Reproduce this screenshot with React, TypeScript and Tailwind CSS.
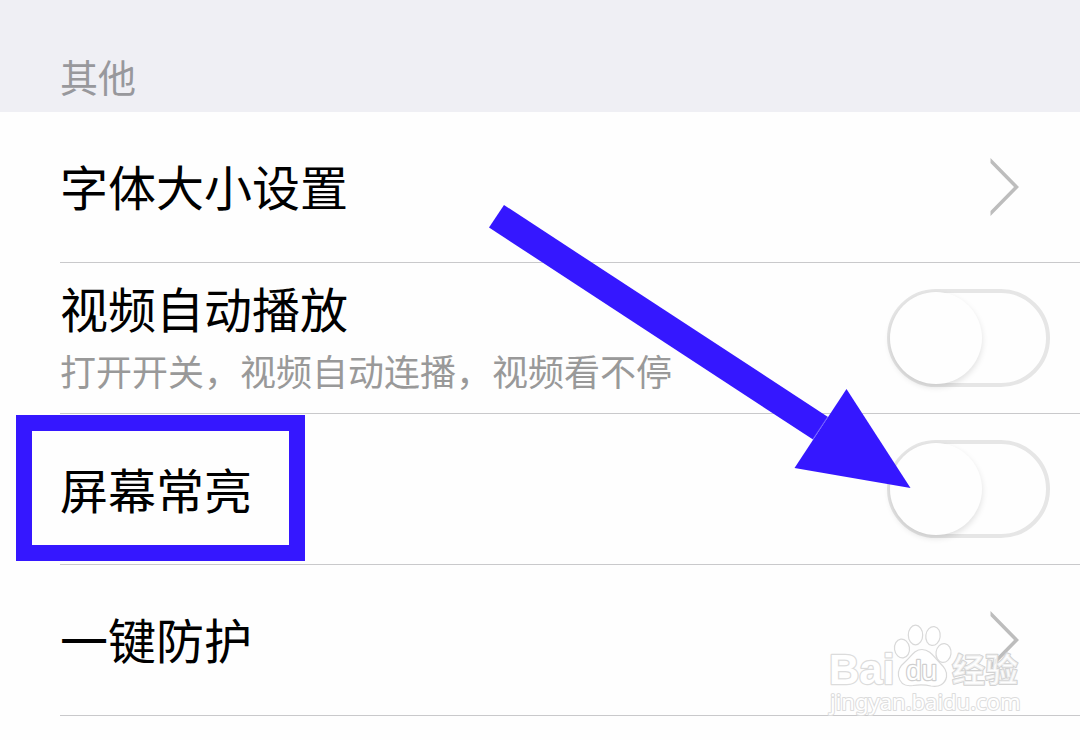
import { useState } from "react";

const titleClass = "text-[48px] leading-[64px] text-black";

function Chevron() {
  return (
    <svg className="mr-[60px] h-[60px] w-8 shrink-0" viewBox="0 0 32 60" fill="none" aria-hidden="true">
      <path d="M2.500 1V6L26 30 2.500 54V59L31 30Z" fill="#bdbdbd" />
    </svg>
  );
}

function LinkRow({ title }: { title: string }) {
  return (
    <li className="ml-[60px] border-b border-[#c9c9cb]">
      <button type="button" className="flex h-[150px] w-full items-center justify-between text-left">
        <span className={`pb-1 ${titleClass}`}>{title}</span>
        <Chevron />
      </button>
    </li>
  );
}

function SwitchRow({ id, title, note, marked }: { id: string; title: string; note?: string; marked?: boolean }) {
  const [on, setOn] = useState(false);
  return (
    <li className="relative ml-[60px] flex h-[151px] items-center justify-between border-b border-[#c9c9cb]">
      {marked && (
        <span className="pointer-events-none absolute -left-11 top-px h-[146px] w-[289px] border-[16px] border-[#3517ff]" />
      )}
      <div className={note ? "pb-0" : "pb-0.5"}>
        <label htmlFor={id} className={`block ${titleClass}`}>
          {title}
        </label>
        {note && <p className="text-[36px] leading-[62px] text-[#999999]">{note}</p>}
      </div>
      <input
        id={id}
        type="checkbox"
        role="switch"
        checked={on}
        onChange={(e) => setOn(e.target.checked)}
        className="mr-[30px] h-[98px] w-[163px] shrink-0 appearance-none rounded-full border-4 border-[#e6e6e6] bg-[#fefefe] before:-ml-px before:-mt-px before:block before:h-[92px] before:w-[92px] before:rounded-full before:bg-[#fefefe] before:shadow-[0_3px_6px_rgba(0,0,0,0.12)] before:content-[''] checked:bg-[#4cd964] checked:before:ml-16"
      />
    </li>
  );
}

function Arrow() {
  return (
    <svg
      className="pointer-events-none absolute left-[489px] top-[205px] h-[284px] w-[422px]"
      viewBox="489 205 422 284"
      aria-hidden="true"
    >
      <path d="M504 205 828 417 813 439.500 489 227.500Z" fill="#3517ff" />
      <path d="M846.500 389 910.500 488 794.500 468Z" fill="#3517ff" />
      <path d="M827.500 417 813 439" stroke="#7d6cff" strokeWidth="0.700" />
    </svg>
  );
}

function Watermark() {
  return (
    <svg
      className="pointer-events-none absolute right-[54px] top-[620px] h-[100px] w-[202px]"
      viewBox="824 620 202 100"
      role="img"
      aria-label="Baidu 经验 jingyan.baidu.com"
    >
      <g fill="#ffffff" fillOpacity="0.75" stroke="#d9d9d9" strokeWidth="1.200" strokeLinejoin="round">
        <ellipse cx="902" cy="648.500" rx="7.500" ry="9.500" transform="rotate(-8 902 648.500)" />
        <ellipse cx="915.500" cy="635" rx="7.200" ry="9.800" />
        <ellipse cx="933" cy="636" rx="7.200" ry="9.500" transform="rotate(8 933 636)" />
        <ellipse cx="943.500" cy="653" rx="7.500" ry="9.500" transform="rotate(8 943.500 653)" />
        <path d="M922 649.500C914 649.500 911 657 905 662C900 666 897.500 670 898.500 676C900 684 906 686.500 913 685.500C919 684.500 925 684.500 931 686C939 687.500 945 684 946.500 677C947.500 671 944 667 939.500 662.500C934 657 930 649.500 922 649.500Z" />
      </g>
      <g strokeLinejoin="round" paintOrder="stroke" fill="#ffffff" stroke="#dcdcdc">
        <text x="829" y="684" fontFamily="Liberation Sans, sans-serif" fontWeight="700" fontSize="42" strokeWidth="2.500">
          Bai
        </text>
        <text x="906" y="680" fontFamily="Liberation Sans, sans-serif" fontSize="28" strokeWidth="2.500" stroke="#cfcfcf">
          du
        </text>
        <text x="952" y="682" fontFamily="Noto Sans CJK SC, sans-serif" fontWeight="700" fontSize="33" strokeWidth="2" stroke="#d2d2d2" fillOpacity="0.700">
          经验
        </text>
        <text x="830" y="710" fontFamily="Noto Sans, sans-serif" fontSize="22" strokeWidth="2">
          jingyan.baidu.com
        </text>
      </g>
    </svg>
  );
}

export default function App() {
  return (
    <main className="relative min-h-screen overflow-hidden bg-[#fefefe] font-['Noto_Sans_CJK_SC',sans-serif]">
      <header className="flex h-28 items-end bg-[#efeff4] px-[60px] pb-2">
        <h1 className="text-[38px] leading-[56px] text-[#98989c]">其他</h1>
      </header>
      <ul>
        <LinkRow title="字体大小设置" />
        <SwitchRow id="autoplay" title="视频自动播放" note="打开开关，视频自动连播，视频看不停" />
        <SwitchRow id="awake" title="屏幕常亮" marked />
        <LinkRow title="一键防护" />
      </ul>
      <Arrow />
      <Watermark />
    </main>
  );
}
